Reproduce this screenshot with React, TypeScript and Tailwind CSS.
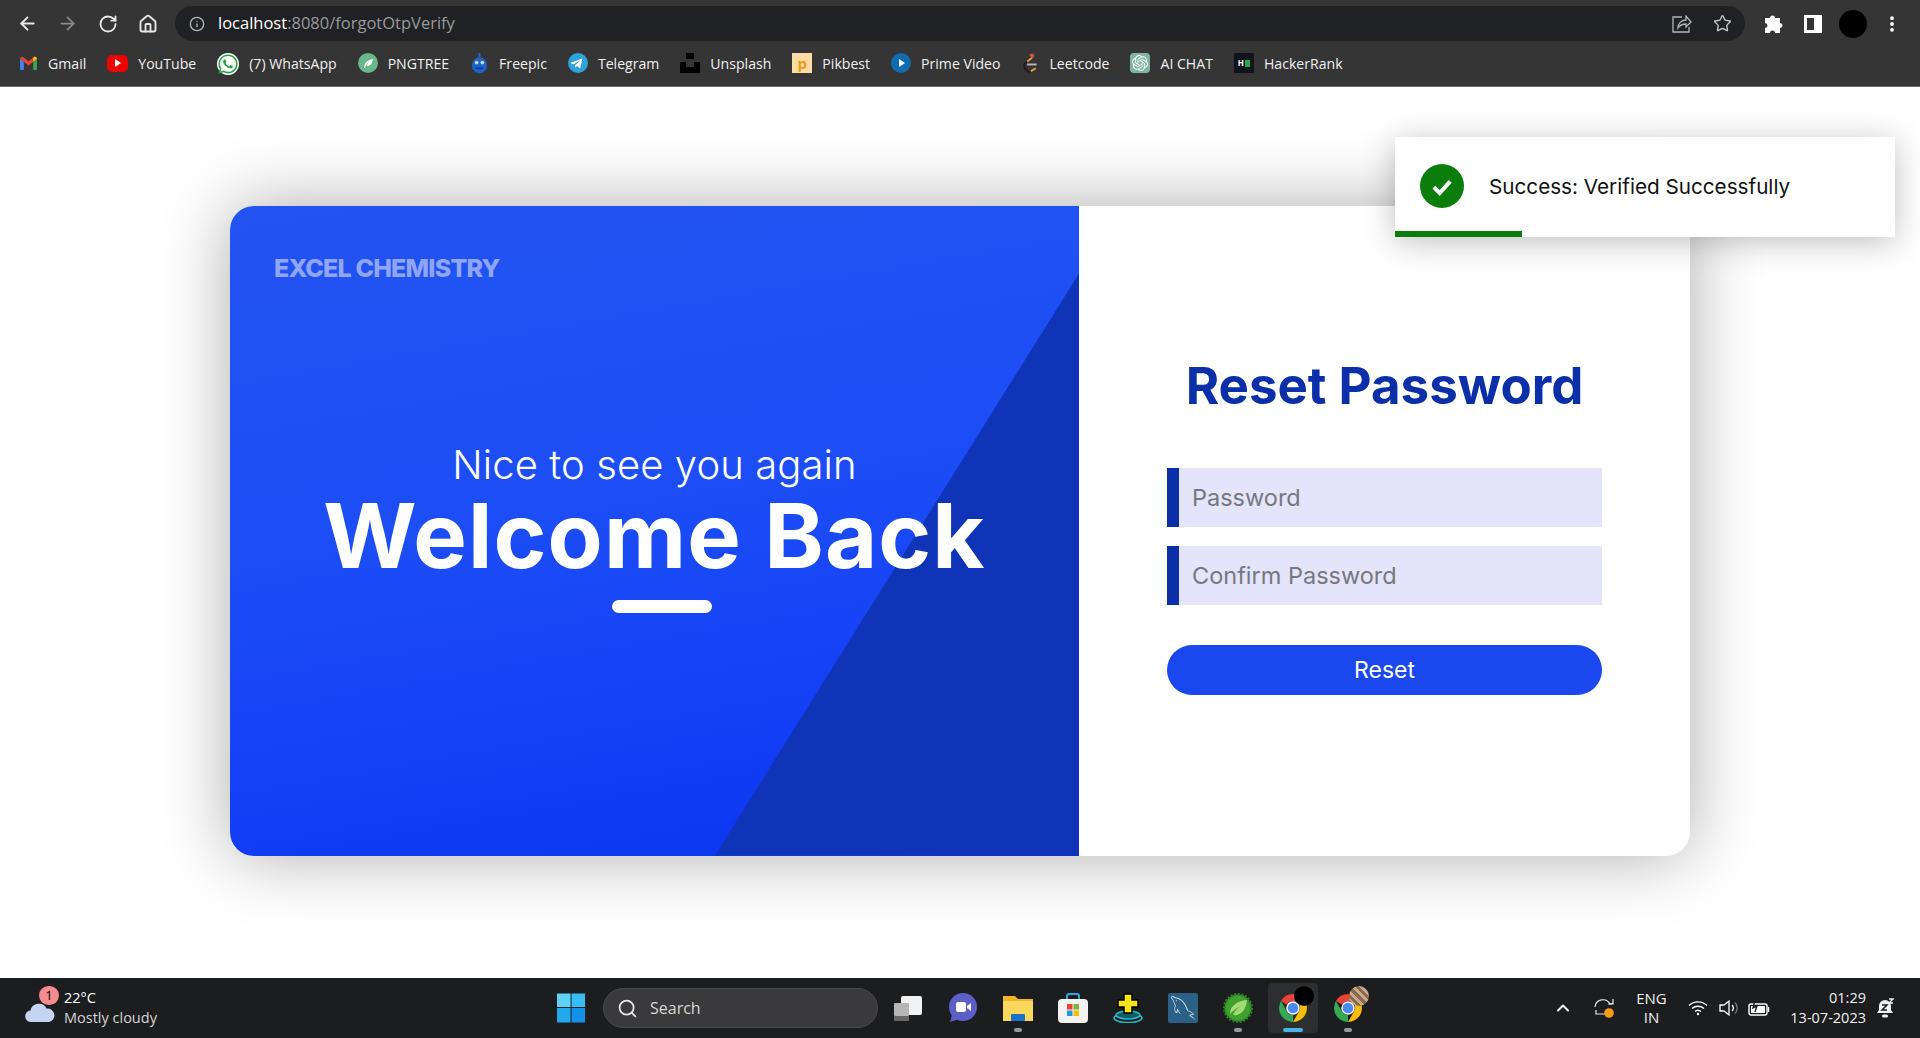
import { ArrowLeft, ArrowRight, ChevronUp, House, Info, MoreVertical, RotateCw, Search, Star } from "lucide-react";
import { FaTelegramPlane, FaWhatsapp } from "react-icons/fa";
import { GrMysql } from "react-icons/gr";
import { SiOpenai } from "react-icons/si";

const ui = "font-['Open_Sans','Noto_Sans',sans-serif]";
const brand = "font-['Inter','Noto_Sans',sans-serif]";

function Gmail() {
  return (
    <svg viewBox="0 0 20 16" className="h-[15px] w-[19px]">
      <path d="M1 15V3l4 3v9z" fill="#4285f4" />
      <path d="M15 15V6l4-3v12z" fill="#34a853" />
      <path d="M1 3c0-2 2-3 3.500-1.800L10 5.500l5.500-4.300C17 0 19 1 19 3l-4 3-5 4-5-4z" fill="#ea4335" />
      <path d="M15 6l4-3c0-2-2-3-3.500-1.800L15 1.600z" fill="#fbbc04" />
    </svg>
  );
}

function BookmarkIcon({ name }: { name: string }) {
  if (name === "Gmail") return <Gmail />;
  if (name === "YouTube")
    return (
      <span className="flex h-[17px] w-[21px] items-center justify-center rounded-[5px] bg-[#f00000]">
        <span className="h-0 w-0 border-y-[4px] border-l-[6px] border-y-transparent border-l-white" />
      </span>
    );
  if (name === "WhatsApp")
    return (
      <span className="flex h-[22px] w-[22px] items-center justify-center rounded-full bg-white">
        <FaWhatsapp className="h-[22px] w-[22px] text-[#25a244]" />
      </span>
    );
  if (name === "PNGTREE")
    return (
      <svg viewBox="0 0 20 20" className="h-[20px] w-[20px]">
        <circle cx="10" cy="10" r="10" fill="#68b88a" />
        <path d="M6 15c0-5 3-8 9-9-1 5-3 7-6 7 0-2 1-3 3-4-3 1-4 3-5 6z" fill="#fff" />
      </svg>
    );
  if (name === "Freepic")
    return (
      <svg viewBox="0 0 20 22" className="h-[21px] w-[19px]">
        <path d="M10 0v4" stroke="#1f6fd6" strokeWidth="2" />
        <ellipse cx="10" cy="13" rx="8" ry="8.500" fill="#1f62c8" />
        <circle cx="7" cy="10" r="2" fill="#bcd6f5" />
        <circle cx="13" cy="10" r="2" fill="#bcd6f5" />
        <rect x="6" y="15" width="8" height="2" fill="#0f3f8e" />
      </svg>
    );
  if (name === "Telegram")
    return (
      <span className="flex h-[20px] w-[20px] items-center justify-center rounded-full bg-[#2fa3dc]">
        <FaTelegramPlane className="h-[13px] w-[13px] -translate-x-px text-white" />
      </span>
    );
  if (name === "Unsplash")
    return (
      <svg viewBox="0 0 20 20" className="h-[20px] w-[20px]">
        <rect x="6" y="0" width="8" height="6" fill="#000" />
        <path d="M0 9h6v5h8V9h6v11H0z" fill="#000" />
      </svg>
    );
  if (name === "Pikbest")
    return (
      <span className="flex h-[20px] w-[20px] items-center justify-center bg-[#fbdca4] text-[15px] leading-none font-bold text-[#f09a1c]">
        p
      </span>
    );
  if (name === "Prime Video")
    return (
      <span className="flex h-[20px] w-[20px] items-center justify-center rounded-full bg-[#0f6cae]">
        <span className="ml-px h-0 w-0 border-y-[4px] border-l-[6px] border-y-transparent border-l-white" />
      </span>
    );
  if (name === "Leetcode")
    return (
      <svg viewBox="0 0 18 22" className="h-[21px] w-[18px]">
        <circle cx="11" cy="3" r="2.500" fill="#c9574a" />
        <path d="M10 4L3 12c-1 3 2 7 6 8" fill="none" stroke="#1c1c1c" strokeWidth="2" />
        <path d="M6 12h10" stroke="#b8b8b8" strokeWidth="2" />
        <path d="M10 19l5-3" stroke="#e5a33c" strokeWidth="2" />
        <path d="M6 9l5-4" stroke="#e5a33c" strokeWidth="2" />
      </svg>
    );
  if (name === "AI CHAT")
    return (
      <span className="flex h-[20px] w-[20px] items-center justify-center rounded-[4px] bg-[#7eb6a2]">
        <SiOpenai className="h-[16px] w-[16px] text-white" />
      </span>
    );
  return (
    <span className="flex h-[20px] w-[20px] items-center justify-center gap-px bg-[#0d141c]">
      <span className="text-[8px] leading-none font-bold text-white">H</span>
      <span className="h-[7px] w-[5px] bg-[#1ba94c]" />
    </span>
  );
}

const bookmarks = [
  "Gmail",
  "YouTube",
  "WhatsApp",
  "PNGTREE",
  "Freepic",
  "Telegram",
  "Unsplash",
  "Pikbest",
  "Prime Video",
  "Leetcode",
  "AI CHAT",
  "HackerRank",
];

function BrowserBar() {
  return (
    <div className={`h-[87px] shrink-0 border-b border-[#6a6a6a] bg-[#353535] ${ui}`}>
      <div className="flex h-[41px] items-start pt-[6px]">
        <div className="flex h-[35px] w-[175px] items-center pl-[17px] text-[#e8e8e8]">
          <ArrowLeft size={21} strokeWidth={2.2} />
          <ArrowRight size={21} strokeWidth={2} className="ml-[19px] text-[#8a8a8a]" />
          <RotateCw size={20} strokeWidth={2.2} className="ml-[20px]" />
          <House size={20} strokeWidth={2.2} className="ml-[20px]" />
        </div>
        <div className="flex h-[35px] w-[1570px] items-center rounded-full bg-[#202124] pr-[13px] pl-[14px]">
          <Info size={16} className="text-[#b5b5b5]" />
          <span className="ml-[13px] text-[16.500px] text-white">
            localhost<span className="text-[#9a9a9a]">:8080/forgotOtpVerify</span>
          </span>
          <svg viewBox="0 0 20 18" className="ml-auto h-[18px] w-[20px] fill-none stroke-[#b5b5b5] stroke-[1.3]">
            <path d="M10 2H1v15h16v-5" />
            <path d="M6 13c0-5 4-8 8-8V1l5 6-5 5V9c-4 0-6 1-8 4z" />
          </svg>
          <Star size={19} strokeWidth={1.7} className="ml-[21px] text-[#c8c8c8]" />
        </div>
        <div className="flex h-[35px] flex-1 items-center text-white">
          <svg viewBox="0 0 20 20" className="ml-[18px] h-[20px] w-[20px] fill-white">
            <path d="M7 4a2.500 2.500 0 0 1 5 0h5v5a2.500 2.500 0 0 1 0 5v5h-5a2.500 2.500 0 0 0-5 0H2v-5a2.500 2.500 0 0 0 0-5V4z" />
          </svg>
          <span className="ml-[21px] flex h-[18px] w-[18px] border-[3px] border-white bg-white">
            <span className="h-full w-[7px] bg-[#353535]" />
          </span>
          <span className="ml-[17px] h-[28px] w-[28px] rounded-full bg-black" />
          <MoreVertical size={20} strokeWidth={2.6} className="ml-[15px]" />
        </div>
      </div>
      <div className="flex h-[45px] items-center gap-[21px] pl-[19px] text-[14.100px] text-[#f0f0f0]">
        {bookmarks.map((name) => (
          <div key={name} className="flex items-center gap-[10px]">
            <BookmarkIcon name={name} />
            <span>{name === "WhatsApp" ? "(7) WhatsApp" : name}</span>
          </div>
        ))}
      </div>
    </div>
  );
}

function WelcomePanel() {
  return (
    <div className={`relative flex w-[849px] flex-col overflow-hidden bg-[linear-gradient(170deg,#2354f0,#1c4df6_45%,#1642f6_70%,#0a32f0)] ${brand}`}>
      <div className="absolute inset-0 bg-[#0f34b8] [clip-path:polygon(849px_68px,849px_650px,485px_650px)]" />
      <p className="relative pt-[37px] pl-[44px] text-[25px] leading-[50px] font-extrabold tracking-[-0.8px] text-[#8fa6f8]">
        EXCEL CHEMISTRY
      </p>
      <div className="relative flex flex-col items-center pt-[147px] text-white">
        <p className="text-[40px] leading-[50px] font-light tracking-[0.1px]">Nice to see you again</p>
        <h1 className="text-[90px] leading-[92px] font-bold tracking-[1.1px]">Welcome Back</h1>
        <span className="mt-[18px] ml-[14px] h-[13px] w-[100px] rounded-full bg-white" />
      </div>
    </div>
  );
}

function ResetForm() {
  return (
    <div className={`flex flex-1 flex-col items-center pt-[150px] ${brand}`}>
      <h2 className="text-[51px] leading-[60px] font-bold text-[#0a2fa8]">Reset Password</h2>
      <div className="mt-[52px] flex w-[435px] flex-col gap-[19px]">
        <input
          placeholder="Password"
          className="h-[59px] w-full border-l-[12px] border-[#0a2fa8] bg-[#e4e4fb] pl-[13px] text-[23.500px] outline-none placeholder:text-[#77777f]"
        />
        <input
          placeholder="Confirm Password"
          className="h-[59px] w-full border-l-[12px] border-[#0a2fa8] bg-[#e4e4fb] pl-[13px] text-[23.500px] outline-none placeholder:text-[#77777f]"
        />
        <button className="mt-[21px] h-[50px] w-full rounded-full bg-[#1a47ee] pt-[2px] text-[23px] text-white">Reset</button>
      </div>
    </div>
  );
}

function Toast() {
  return (
    <div className={`absolute top-[50px] right-[25px] flex h-[100px] w-[500px] items-center bg-white pb-[2px] pl-[25px] shadow-[0_5px_30px_rgba(0,0,0,0.25)] ${brand}`}>
      <span className="flex h-[44px] w-[44px] items-center justify-center rounded-full bg-[#0b7d0b]">
        <svg viewBox="0 0 24 24" className="h-[28px] w-[28px] fill-none stroke-white stroke-[3.500]">
          <path d="M5 13l5 5 9-10" />
        </svg>
      </span>
      <span className="mt-[2px] ml-[25px] text-[20.700px] text-[#111]">Success: Verified Successfully</span>
      <span className="absolute bottom-0 left-0 h-[6px] w-[127px] bg-[#0b7d0b]" />
    </div>
  );
}

function Chrome({ className }: { className: string }) {
  return (
    <svg viewBox="0 0 30 30" className={className}>
      <path d="M15 1a14 14 0 0 1 12.100 7H15a7 7 0 0 0-6.100 3.500L2.900 8A14 14 0 0 1 15 1z" fill="#ea4335" />
      <path d="M27.100 8A14 14 0 0 1 15 29l6-10.500A7 7 0 0 0 21 11z" fill="#fbbc04" />
      <path d="M15 29A14 14 0 0 1 2.900 8l6 10.500A7 7 0 0 0 15 22z" fill="#34a853" />
      <circle cx="15" cy="15" r="6" fill="#4a8af4" stroke="#fff" strokeWidth="1.500" />
    </svg>
  );
}

function Taskbar() {
  return (
    <div className={`flex h-[60px] shrink-0 items-center bg-[#1c1d1f] text-white ${ui}`}>
      <div className="relative flex w-[557px] items-center pl-[64px]">
        <svg viewBox="0 0 32 22" className="absolute top-[14px] left-[24px] h-[21px] w-[32px]">
          <path d="M7 21a6 6 0 0 1-1-12 9 9 0 0 1 17-2 7 7 0 0 1 2 14z" fill="#c6d4f4" />
        </svg>
        <span className="absolute top-[-2px] left-[39px] flex h-[19px] w-[20px] items-center justify-center rounded-full bg-[#f58a8f] text-[13px] text-black">
          1
        </span>
        <div className="text-[14.500px] leading-[20px]">
          <p>22°C</p>
          <p className="text-[#d6d6d6]">Mostly cloudy</p>
        </div>
      </div>
      <svg viewBox="0 0 30 30" className="h-[30px] w-[29px]">
        <rect x="0" y="0" width="14" height="14" fill="#5fd0f6" />
        <rect x="15" y="0" width="14" height="14" fill="#38bdf3" />
        <rect x="0" y="15" width="14" height="15" fill="#23a8ee" />
        <rect x="15" y="15" width="14" height="15" fill="#1490e8" />
      </svg>
      <div className="ml-[17px] flex h-[40px] w-[275px] items-center rounded-full border border-[#4a4a4a] bg-[#3a3a3c] pl-[13px]">
        <Search size={21} className="text-[#e8e8e8]" />
        <span className="ml-[12px] text-[16px] text-[#d6d6d6]">Search</span>
      </div>
      <div className="ml-[15px] flex items-center gap-[25px]">
        <svg viewBox="0 0 30 30" className="h-[30px] w-[30px]">
          <rect x="8" y="3" width="21" height="19" rx="2" fill="#f1f1f1" />
          <rect x="1" y="10" width="15" height="13" rx="1" fill="#b6b6b6" />
          <rect x="1" y="23" width="15" height="5" fill="#666" />
        </svg>
        <svg viewBox="0 0 30 30" className="h-[30px] w-[30px]">
          <circle cx="15" cy="14" r="14" fill="#5d5fc7" />
          <path d="M4 22l-2 7 9-3z" fill="#5d5fc7" />
          <rect x="8" y="9" width="10" height="10" rx="2" fill="#fff" />
          <path d="M19 13l4-3v8l-4-3z" fill="#fff" />
        </svg>
        <div className="relative h-[30px] w-[30px]">
          <svg viewBox="0 0 30 30" className="h-[30px] w-[30px]">
            <path d="M0 3h12l3 3h15v22H0z" fill="#f0b429" />
            <rect x="0" y="8" width="30" height="20" fill="#fbd75b" />
            <rect x="8" y="21" width="14" height="7" rx="1" fill="#1b73c9" />
          </svg>
          <span className="absolute top-[35px] left-[11px] h-[4px] w-[8px] rounded-full bg-[#9a9a9a]" />
        </div>
        <svg viewBox="0 0 30 30" className="h-[30px] w-[30px]">
          <path d="M9 7V3a2 2 0 0 1 2-2h8a2 2 0 0 1 2 2v4" fill="none" stroke="#29a9e0" strokeWidth="2" />
          <rect x="0" y="6" width="30" height="24" rx="4" fill="#f2f2f2" />
          <rect x="9" y="11" width="5.500" height="5.500" fill="#ea4335" />
          <rect x="15.500" y="11" width="5.500" height="5.500" fill="#7cb342" />
          <rect x="9" y="17.500" width="5.500" height="5.500" fill="#1e9be0" />
          <rect x="15.500" y="17.500" width="5.500" height="5.500" fill="#fbbc04" />
        </svg>
        <svg viewBox="0 0 30 30" className="h-[30px] w-[30px]">
          <ellipse cx="15" cy="25" rx="14" ry="4.500" fill="none" stroke="#27b7c4" strokeWidth="1.500" />
          <ellipse cx="15" cy="22" rx="12" ry="4" fill="#0f5d6b" stroke="#27b7c4" strokeWidth="1.500" />
          <path d="M11 1h8v6h6v7h-6v6h-8v-6H5V7h6z" fill="#f5e31c" stroke="#000" strokeWidth="1.500" />
        </svg>
        <span className="flex h-[30px] w-[30px] items-center justify-center rounded-[2px] bg-[#2b6186]">
          <GrMysql className="h-[24px] w-[24px] text-[#cfe0ea]" />
        </span>
        <div className="relative h-[30px] w-[30px]">
          <svg viewBox="0 0 30 30" className="h-[30px] w-[30px]">
            <circle cx="15" cy="15" r="13.500" fill="#3fa12f" stroke="#2e7d22" strokeWidth="3" strokeDasharray="2 1.500" />
            <path d="M7 21c0-8 7-13 17-14-1 11-7 16-14 15 1-3 4-7 8-9-5 2-8 5-11 8z" fill="#a3d977" />
          </svg>
          <span className="absolute top-[35px] left-[11px] h-[4px] w-[8px] rounded-full bg-[#9a9a9a]" />
        </div>
        <div className="relative mx-[-10px] flex h-[50px] w-[50px] items-center justify-center rounded-[4px] bg-[#2d2e30]">
          <Chrome className="h-[30px] w-[30px]" />
          <span className="absolute top-[3px] right-[4px] h-[20px] w-[20px] rounded-full bg-black" />
          <span className="absolute bottom-[1px] left-[15px] h-[4px] w-[20px] rounded-full bg-[#4cb2ea]" />
        </div>
        <div className="relative h-[30px] w-[30px]">
          <Chrome className="h-[30px] w-[30px]" />
          <span className="absolute top-[-7px] left-[16px] h-[20px] w-[20px] rounded-full bg-[repeating-linear-gradient(45deg,#8a6a50,#8a6a50_3px,#c9a98a_3px,#c9a98a_6px)]" />
          <span className="absolute top-[35px] left-[11px] h-[4px] w-[8px] rounded-full bg-[#9a9a9a]" />
        </div>
      </div>
      <div className="ml-auto flex items-center pr-[26px]">
        <ChevronUp size={20} strokeWidth={2.4} className="text-[#eee]" />
        <svg viewBox="0 0 22 22" className="ml-[20px] h-[22px] w-[22px] fill-none stroke-[#e8e8e8] stroke-[1.2]">
          <path d="M2 10a8 8 0 0 1 15-3l3-1" />
          <path d="M20 2v5h-5" />
          <path d="M12 17H3v-4" />
          <circle cx="16" cy="16" r="4.800" fill="#f59a1b" stroke="none" />
        </svg>
        <div className="ml-[20px] flex w-[33px] flex-col items-center text-[15px] leading-[19px] text-[#efefef]">
          <span>ENG</span>
          <span>IN</span>
        </div>
        <svg viewBox="0 0 20 16" className="ml-[20px] h-[16px] w-[20px] fill-none stroke-white stroke-[1.4]">
          <path d="M1 5.500a13 13 0 0 1 18 0" />
          <path d="M4 8.500a9 9 0 0 1 12 0" />
          <path d="M7 11.500a4.500 4.500 0 0 1 6 0" />
          <circle cx="10" cy="14" r="1.200" fill="#fff" stroke="none" />
        </svg>
        <svg viewBox="0 0 22 18" className="ml-[11px] h-[18px] w-[22px] fill-none stroke-[1.3]">
          <path d="M1 6h4l5-4v14l-5-4H1z" stroke="#fff" />
          <path d="M13 6a4 4 0 0 1 0 6" stroke="#fff" />
          <path d="M16 3.500a8 8 0 0 1 0 11" stroke="#777" />
        </svg>
        <svg viewBox="0 0 22 18" className="ml-[7px] h-[18px] w-[22px] fill-none stroke-white stroke-[1.4]">
          <rect x="1" y="5" width="18" height="11" rx="2" />
          <rect x="3" y="7" width="14" height="7" fill="#fff" stroke="none" />
          <path d="M20.500 8v5" />
          <path d="M7 1L5 9l4-2-2 6" stroke="#1c1d1f" />
        </svg>
        <div className="ml-[18px] flex w-[78px] flex-col items-end text-[14.500px] leading-[20px] whitespace-nowrap text-[#efefef]">
          <span>01:29</span>
          <span>13-07-2023</span>
        </div>
        <svg viewBox="0 0 18 20" className="ml-[10px] h-[20px] w-[18px]">
          <path d="M9 2a6 6 0 0 0-6 6v4l-2 3h16l-2-3V8a6 6 0 0 0-6-6z" fill="#f0f0f0" />
          <rect x="6" y="16.500" width="6" height="3" rx="1.500" fill="#f0f0f0" />
          <path d="M6 7h5l-5 5h5" fill="none" stroke="#1c1d1f" strokeWidth="1.500" />
          <path d="M13 1h4l-4 4h4" fill="none" stroke="#f0f0f0" strokeWidth="1.300" />
        </svg>
      </div>
    </div>
  );
}

export default function App() {
  return (
    <div className="flex h-[1038px] w-full flex-col overflow-hidden bg-white">
      <BrowserBar />
      <main className="relative flex flex-1 items-center justify-center pb-[4px]">
        <div className="flex h-[650px] w-[1460px] overflow-hidden rounded-[24px] bg-white shadow-[0_0_70px_rgba(0,0,0,0.33)]">
          <WelcomePanel />
          <ResetForm />
        </div>
        <Toast />
      </main>
      <Taskbar />
    </div>
  );
}
